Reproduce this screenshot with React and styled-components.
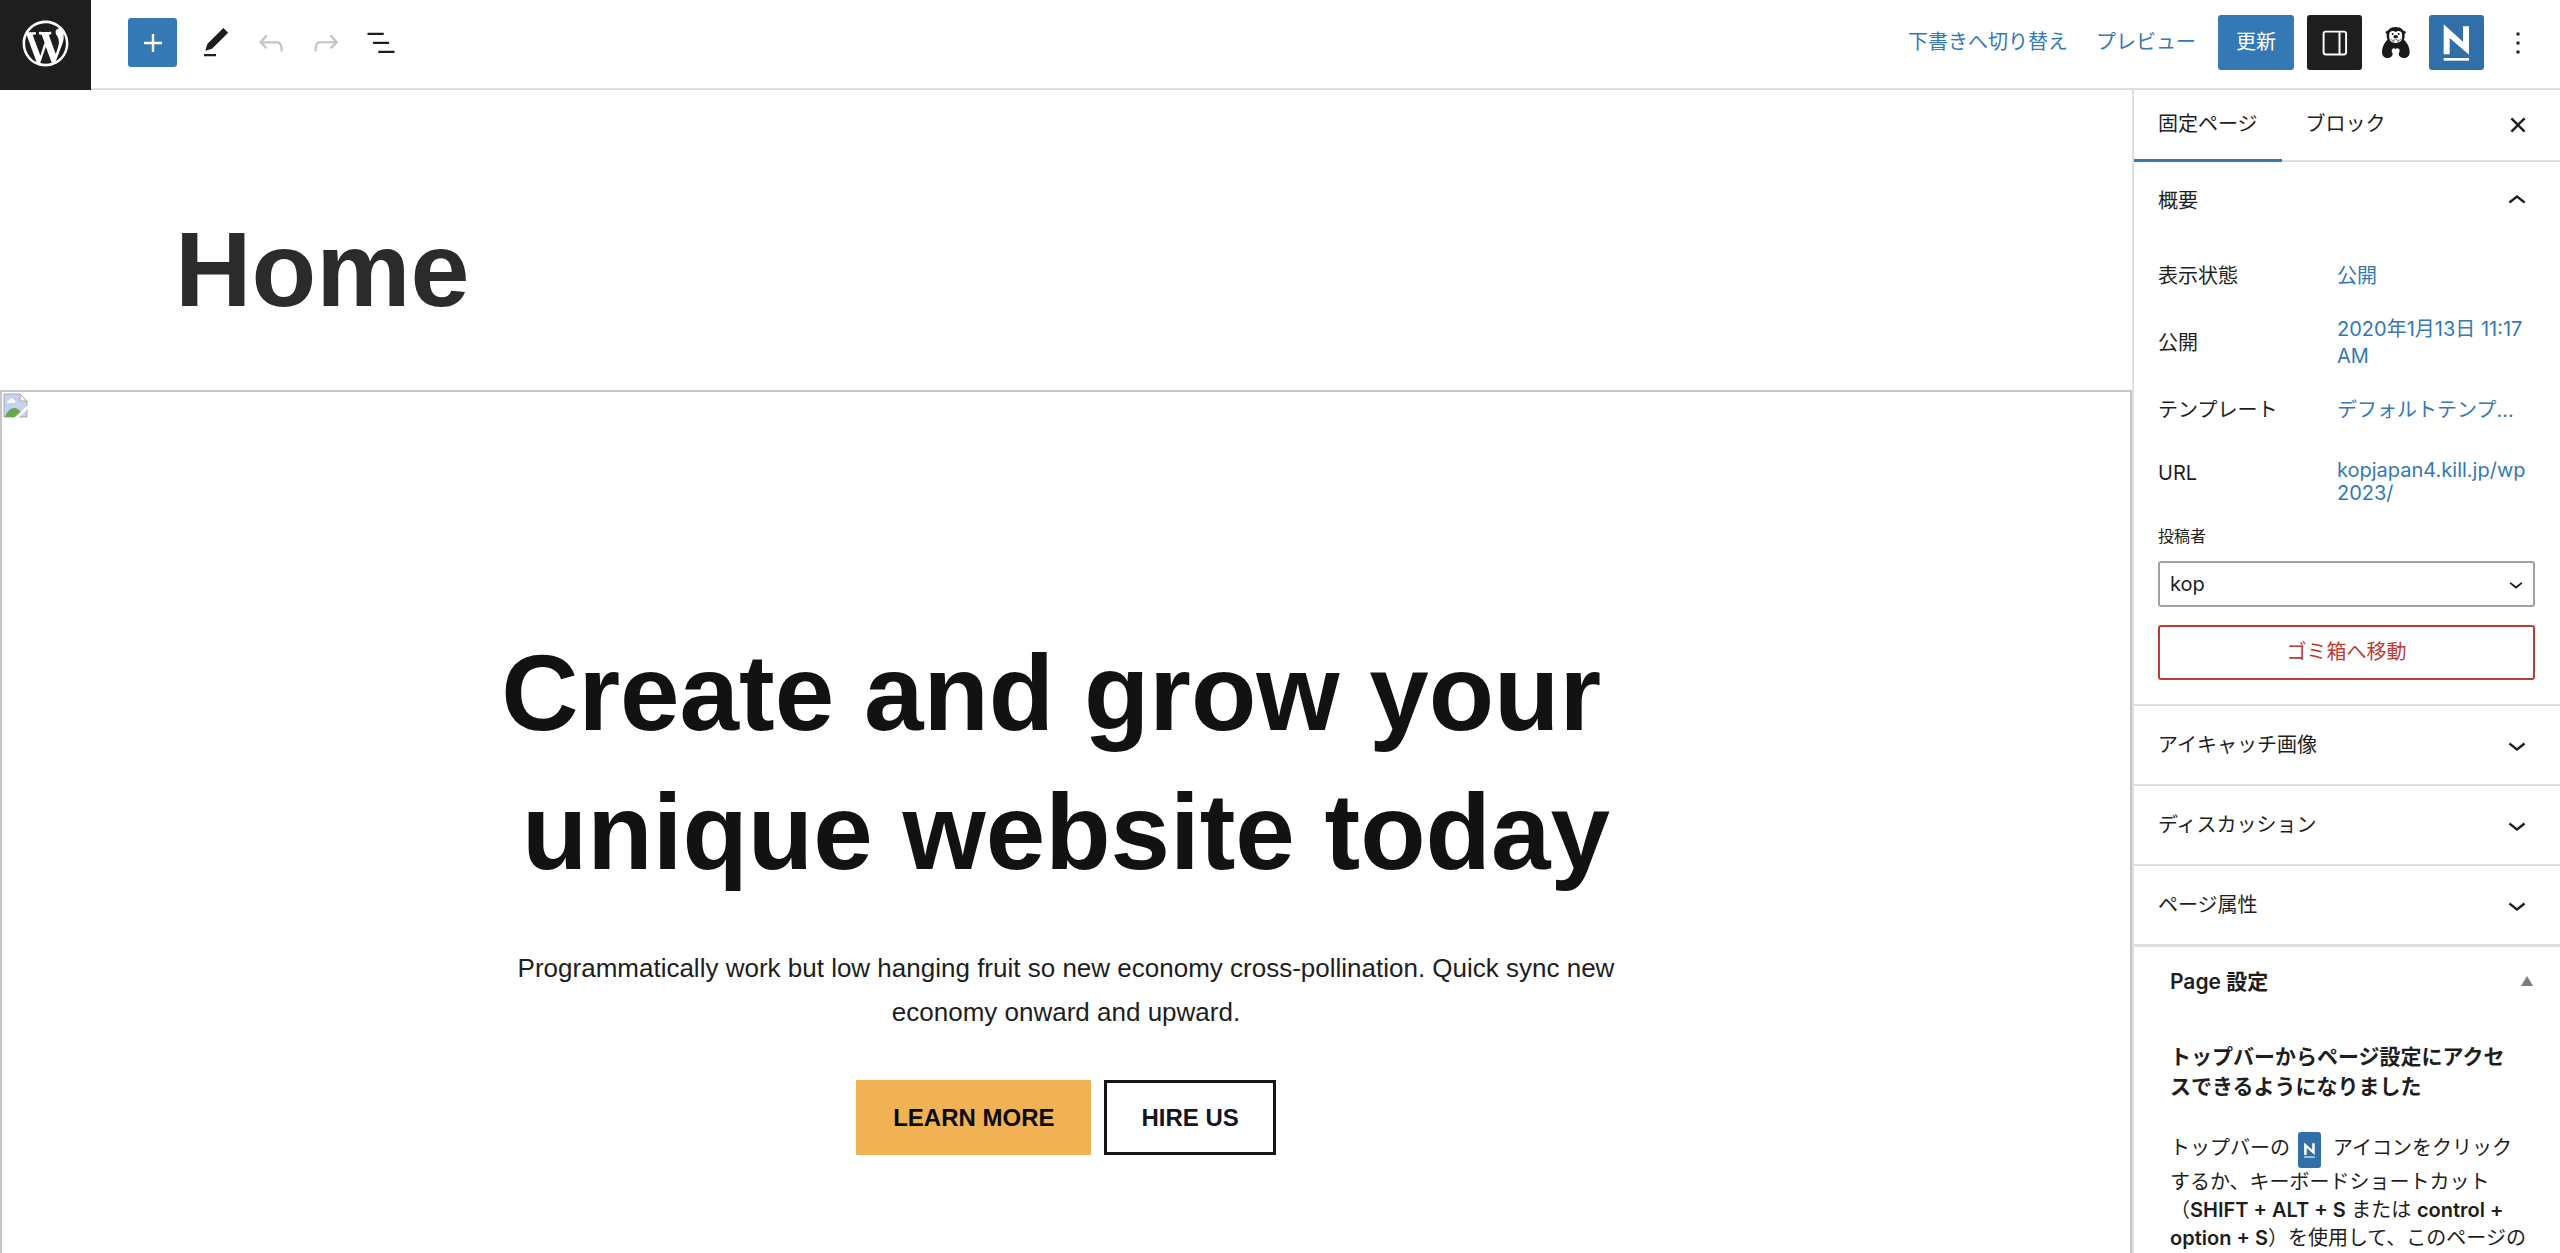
import styled, {createGlobalStyle} from 'styled-components';
import {useState} from 'react';

const GlobalStyle = createGlobalStyle`
  :root {
    --colors-primary: #3479b5;
    --colors-primary-dark: #306fa7;
    --colors-text: #1e1e1e;
    --colors-line: #dfdfdf;
    --colors-danger: #bf3a34;
    --family-ui: Inter, "Noto Sans CJK JP", sans-serif;
    --family-content: "Liberation Sans", Arial, sans-serif;
    --fs-sm: 16px;
    --fs-md: 20px;
    --fs-lg: 21px;
  }

  * {
    box-sizing: border-box;
  }

  body {
    margin: 0;
    background: #fff;
    color: var(--colors-text);
    font-family: var(--family-ui);
    font-size: var(--fs-md);
    line-height: 27px;
  }

  button, select {
    font: inherit;
    color: inherit;
    cursor: pointer;
  }
`;

const Screen = styled.div`
  display: flex;
  flex-direction: column;
  height: 100vh;
`;

const Header = styled.header`
  display: flex;
  align-items: center;
  flex: none;
  height: 90px;
  padding-right: 15px;
  border-bottom: 2px solid var(--colors-line);
`;

const HomeLink = styled.a`
  display: flex;
  align-items: center;
  justify-content: center;
  align-self: flex-start;
  flex: none;
  width: 91px;
  height: 90px;
  padding-bottom: 4px;
  background: var(--colors-text);
  color: #fff;
`;

const Tools = styled.div`
  display: flex;
  align-items: center;
  margin: 0 auto 0 37px;
  padding-bottom: 3px;
`;

const InserterButton = styled.button`
  display: flex;
  align-items: center;
  justify-content: center;
  width: 49px;
  height: 49px;
  margin-right: 11px;
  padding: 0;
  border: 0;
  border-radius: 3px;
  background: var(--colors-primary);
  color: #fff;
`;

const IconButton = styled.button`
  display: flex;
  align-items: center;
  justify-content: center;
  flex: none;
  width: 55px;
  height: 55px;
  padding: 0;
  border: 0;
  border-radius: 3px;
  background: ${({$tone}) => $tone || 'transparent'};
  color: ${({$tone}) => ($tone ? '#fff' : 'var(--colors-text)')};
  &:disabled {
    color: #c4c4c4;
  }
`;

const Actions = styled.div`
  display: flex;
  align-items: center;
  gap: 6px;
  padding-bottom: 3px;
`;

const TextButton = styled.button`
  height: 55px;
  margin-right: 10px;
  padding: 0 6px;
  border: 0;
  background: none;
  color: var(--colors-primary);
`;

const PrimaryButton = styled.button`
  height: 55px;
  margin-right: 7px;
  padding: 0 18px;
  border: 0;
  border-radius: 3px;
  background: var(--colors-primary);
  color: #fff;
`;

const Workspace = styled.div`
  display: flex;
  flex: 1;
  min-height: 0;
`;

const Canvas = styled.main`
  flex: 1;
  min-width: 0;
  overflow: hidden;
  font-family: var(--family-content);
`;

const PageTitle = styled.h1`
  margin: 0;
  padding: 110px 175px 52px;
  color: #2b2b2b;
  font-size: 106px;
  line-height: 138px;
`;

const Cover = styled.section`
  min-height: 1100px;
  padding: 1px;
  border: 2px solid #c6c6c6;
  text-align: center;
`;

const CoverContent = styled.div`
  max-width: 1140px;
  margin: 0 auto;
  padding-top: 206px;
`;

const CoverTitle = styled.h2`
  margin: 0;
  color: #121212;
  font-size: 107px;
  line-height: 139px;
`;

const CoverText = styled.p`
  margin: 44px 0 46px;
  line-height: 44px;
  font-size: 26px;
`;

const CoverButtons = styled.div`
  display: flex;
  justify-content: center;
  gap: 13px;
`;

const CoverButton = styled.a`
  padding: 0 34px;
  border: 3px solid ${({$filled}) => ($filled ? '#f0b254' : '#15151b')};
  background: ${({$filled}) => ($filled ? '#f0b254' : '#fff')};
  color: ${({$filled}) => ($filled ? '#0a0a0a' : '#15151b')};
  font-size: 24px;
  font-weight: 700;
  line-height: 69px;
  text-decoration: none;
`;

const BrokenImage = styled.svg`
  display: block;
  width: 25px;
  height: 25px;
`;

const Sidebar = styled.aside`
  flex: none;
  width: 428px;
  overflow: hidden;
  border-left: 2px solid var(--colors-line);
`;

const Tabs = styled.div`
  display: flex;
  align-items: stretch;
  height: 72px;
  padding-right: 15px;
  border-bottom: 2px solid var(--colors-line);
`;

const Tab = styled.button`
  padding: 0 24px;
  margin-bottom: -2px;
  border: 0;
  border-bottom: 3px solid ${({$active}) => ($active ? 'var(--colors-primary)' : 'transparent')};
  background: none;
`;

const CloseButton = styled(IconButton)`
  align-self: center;
  margin-left: auto;
`;

const Panel = styled.section`
  border-bottom: 2px solid var(--colors-line);
`;

const PanelToggle = styled.button`
  display: flex;
  align-items: center;
  justify-content: space-between;
  width: 100%;
  height: 78px;
  padding: 0 25px 0 24px;
  border: 0;
  background: none;
  text-align: left;
`;

const PanelBody = styled.div`
  padding: 0 25px 24px 24px;
`;

const Rows = styled.dl`
  display: grid;
  grid-template-columns: 179px 1fr;
  grid-template-rows: 62px 72px 62px 82px;
  align-items: center;
  margin: 0;
  padding-top: 5px;
`;

const RowLabel = styled.dt`
  padding-bottom: ${({$raised}) => ($raised ? '18px' : '0')};
`;

const RowValue = styled.dd`
  margin: 0;
  line-height: ${({$tight}) => ($tight ? '23px' : '27px')};
`;

const ValueButton = styled.button`
  display: block;
  width: 100%;
  padding: 0;
  border: 0;
  background: none;
  color: var(--colors-primary);
  text-align: left;
`;

const ValueLink = styled.a`
  color: var(--colors-primary);
  text-decoration: none;
`;

const FieldLabel = styled.label`
  display: block;
  margin-bottom: 12px;
  font-size: var(--fs-sm);
  line-height: 26px;
`;

const SelectWrap = styled.div`
  display: grid;
  align-items: center;
  margin-bottom: 18px;
  & > * {
    grid-area: 1 / 1;
  }
  & > svg {
    justify-self: end;
    margin-right: 5px;
    pointer-events: none;
  }
`;

const Select = styled.select`
  width: 100%;
  height: 46px;
  padding: 0 10px;
  border: 2px solid #a3a3a3;
  border-radius: 3px;
  background: #fff;
  appearance: none;
`;

const TrashButton = styled.button`
  width: 100%;
  height: 55px;
  border: 2px solid var(--colors-danger);
  border-radius: 3px;
  background: none;
  color: var(--colors-danger);
`;

const MetaBox = styled.section`
  padding: 0 25px 0 36px;
  border-top: 1px solid var(--colors-line);
`;

const MetaToggle = styled.button`
  display: flex;
  align-items: center;
  justify-content: space-between;
  width: 100%;
  height: 68px;
  padding: 0 2px 0 0;
  border: 0;
  background: none;
  font-size: var(--fs-lg);
  font-weight: 600;
`;

const MetaTitle = styled.h3`
  margin: 27px 10px 30px 0;
  font-size: var(--fs-lg);
  font-weight: 700;
  line-height: 30px;
`;

const MetaText = styled.p`
  margin: 0 -5px 0 0;
  line-height: 28px;
  & > b {
    font-weight: 600;
  }
`;

const InlineBadge = styled.span`
  display: inline-flex;
  justify-content: center;
  align-items: center;
  width: 23px;
  height: 36px;
  margin: 0 12px 0 8px;
  border-radius: 3px;
  background: var(--colors-primary-dark);
  color: #fff;
  vertical-align: middle;
`;

const paths = {
    plus: 'M18 11.2h-5.2V6h-1.6v5.2H6v1.6h5.2V18h1.6v-5.2H18z',
    edit: 'M20.1 5.1L16.9 2 6.2 12.7l-1.3 4.4 4.5-1.3L20.1 5.1zM4 20.8h8v-1.5H4v1.5z',
    undo: 'M18.3 11.7c-.6-.6-1.4-.9-2.3-.9H6.7l2.9-3.3-1.1-1-4.5 5L8.5 16l1-1-2.7-2.7H16c.5 0 .9.2 1.3.5 1 1 1 3.4 1 4.5v.3h1.5v-.2c0-1.5 0-4.3-1.5-5.7z',
    redo: 'M15.6 6.5l-1.1 1 2.9 3.3H8c-.9 0-1.7.3-2.3.9-1.4 1.5-1.4 4.2-1.4 5.6v.2h1.5v-.3c0-1.1 0-3.5 1-4.5.3-.3.7-.5 1.3-.5h9.2L14.5 15l1.1 1.1 4.6-4.6-4.6-5z',
    list: 'M13.8 5.2H3v1.5h10.8V5.2zm-3.6 12v1.5H21v-1.5H10.2zm7.2-6H6.6v1.5h10.8v-1.5z',
    more: 'M13 19h-2v-2h2v2zm0-6h-2v-2h2v2zm0-6h-2V5h2v2z',
    close: 'M12 13.4l-4.9 5-1.5-1.4 5-5-5-5 1.5-1.4 4.9 5 4.9-5L18.4 7l-5 5 5 5-1.5 1.4z',
    down: 'M17.5 11.6L12 16l-5.5-4.4.9-1.2L12 14l4.5-3.6 1 1.2z',
    up: 'M6.5 12.4L12 8l5.5 4.4-.9 1.2L12 10l-4.5 3.6-1-1.2z',
    wordpress: 'M20 10c0-5.51-4.49-10-10-10C4.48 0 0 4.49 0 10c0 5.52 4.48 10 10 10 5.51 0 10-4.48 10-10zM7.78 15.37L4.37 6.22c.55-.02 1.17-.08 1.17-.08.5-.06.44-1.13-.06-1.11 0 0-1.45.11-2.37.11-.18 0-.37 0-.58-.01C4.12 2.69 6.87 1.11 10 1.11c2.33 0 4.45.87 6.05 2.34-.68-.11-1.65.39-1.65 1.58 0 .74.45 1.36.9 2.1.35.61.55 1.36.55 2.46 0 1.49-1.4 5-1.4 5l-3.03-8.37c.54-.02.82-.17.82-.17.5-.05.44-1.25-.06-1.22 0 0-1.44.12-2.38.12-.87 0-2.33-.12-2.33-.12-.5-.03-.56 1.2-.06 1.22l.92.08 1.26 3.41zM17.41 10c.24-.64.74-1.87.43-4.25.7 1.29 1.05 2.71 1.05 4.25 0 3.29-1.73 6.24-4.4 7.78.97-2.59 1.94-5.2 2.92-7.78zM6.1 18.09C3.12 16.65 1.11 13.53 1.11 10c0-1.3.23-2.48.72-3.59C3.25 10.3 4.67 14.2 6.1 18.09zm4.03-6.63l2.58 6.98c-.86.29-1.76.45-2.71.45-.79 0-1.57-.11-2.29-.33.81-2.38 1.62-4.74 2.42-7.1z'
};

const Icon = ({name, size = 36, viewBox = '0 0 24 24'}) => (
    <svg width={size} height={size} viewBox={viewBox} fill="currentColor" aria-hidden="true">
        <path d={paths[name]}/>
    </svg>
);

const PanelIcon = () => (
    <svg width="36" height="36" viewBox="0 0 24 24" fill="none" stroke="currentColor" strokeWidth="1.3" aria-hidden="true">
        <rect x="4.4" y="4.4" width="15" height="15.2" rx="1.4"/>
        <path d="M15 4.4v15.2"/>
    </svg>
);

const NishikiIcon = ({size = 55}) => (
    <svg width={size} height={size} viewBox="0 0 165 165" fill="currentColor" aria-hidden="true">
        <path d="M44 28l58 52V34h18v85L62 69v49H44z"/>
        <path d="M44 129h76v8H44z"/>
    </svg>
);

const AnimalIcon = () => (
    <svg width="28" height="31" viewBox="0 0 84 93" aria-hidden="true">
        <g fill="#1a1a1a">
            <circle cx="16" cy="16" r="5"/>
            <circle cx="66" cy="16" r="5"/>
            <path d="M41 0c17 0 27 10 27 25 0 6-1 9-2 13 11 10 17 24 17 37 0 11-6 18-16 18-11 0-17-5-17-12 0-4 3-6 3-10 0-4-3-7-7-7-2 0-4 1-5 3-1-2-3-3-5-3-4 0-7 3-7 7 0 4 3 6 3 10 0 7-6 12-16 12C6 93 0 86 0 75c0-13 6-27 16-37-1-4-2-7-2-13C14 10 24 0 41 0z"/>
        </g>
        <path d="M41 16c5-6 18-5 19 4 1 5 0 9 0 14-1 9-9 14-19 14s-18-5-19-14c0-5-1-9 0-14 1-9 14-10 19-4z" fill="#fff"/>
        <g fill="#1a1a1a">
            <circle cx="32" cy="21" r="3"/>
            <circle cx="50" cy="21" r="3"/>
            <ellipse cx="41" cy="29" rx="7" ry="5"/>
        </g>
        <path d="M25 36c6 6 12 5 16 0 4 5 10 6 16 0M32 43l4 1M50 43l-4 1" fill="none" stroke="#1a1a1a" strokeWidth="2"/>
    </svg>
);

const TriangleIcon = () => (
    <svg width="12" height="10" viewBox="0 0 12 10" aria-hidden="true">
        <path d="M6 0l6 10H0z" fill="#787c82"/>
    </svg>
);

const closedPanels = ['アイキャッチ画像', 'ディスカッション', 'ページ属性'];

const EditorHeader = () => (
    <Header>
        <HomeLink href="#" aria-label="WordPress">
            <Icon name="wordpress" size={55} viewBox="-2 -2 24 24"/>
        </HomeLink>
        <Tools>
            <InserterButton aria-label="追加"><Icon name="plus"/></InserterButton>
            <IconButton aria-label="ツール"><Icon name="edit"/></IconButton>
            <IconButton aria-label="元に戻す" disabled><Icon name="undo"/></IconButton>
            <IconButton aria-label="やり直す" disabled><Icon name="redo"/></IconButton>
            <IconButton aria-label="リスト表示"><Icon name="list"/></IconButton>
        </Tools>
        <Actions>
            <TextButton>下書きへ切り替え</TextButton>
            <TextButton>プレビュー</TextButton>
            <PrimaryButton>更新</PrimaryButton>
            <IconButton $tone="var(--colors-text)" aria-label="設定"><PanelIcon/></IconButton>
            <IconButton aria-label="プラグイン"><AnimalIcon/></IconButton>
            <IconButton $tone="var(--colors-primary-dark)" aria-label="ページ設定"><NishikiIcon/></IconButton>
            <IconButton aria-label="オプション"><Icon name="more"/></IconButton>
        </Actions>
    </Header>
);

const PageCanvas = () => (
    <Canvas>
        <PageTitle>Home</PageTitle>
        <Cover>
            <BrokenImage viewBox="0 0 25 25" aria-hidden="true">
                <path d="M1 1h16l7 7v16H1z" fill="#c5d3f3" stroke="#a8a8a8"/>
                <path d="M17 1v7h7z" fill="#fff" stroke="#a8a8a8"/>
                <path d="M4 10c0-2 2-2 2-3 2-3 5-1 5 0 2 0 2 3 0 3z" fill="#fff"/>
                <path d="M2 24c2-6 6-9 9-9s6 2 8 5l-4 4z" fill="#67a94c"/>
                <path d="M25 12v4L15 25h-4z" fill="#fff"/>
            </BrokenImage>
            <CoverContent>
                <CoverTitle>Create and grow your&nbsp;<br/>unique website today</CoverTitle>
                <CoverText>
                    Programmatically work but low hanging fruit so new economy cross-pollination. Quick sync new economy onward and upward.
                </CoverText>
                <CoverButtons>
                    <CoverButton href="#" $filled>LEARN MORE</CoverButton>
                    <CoverButton href="#">HIRE US</CoverButton>
                </CoverButtons>
            </CoverContent>
        </Cover>
    </Canvas>
);

const SummaryPanel = () => {
    const [open, setOpen] = useState(true);
    const [author, setAuthor] = useState('kop');

    return (
        <Panel>
            <PanelToggle aria-expanded={open} onClick={() => setOpen(!open)}>
                概要
                <Icon name={open ? 'up' : 'down'}/>
            </PanelToggle>
            {open && (
                <PanelBody>
                    <Rows>
                        <RowLabel>表示状態</RowLabel>
                        <RowValue><ValueButton>公開</ValueButton></RowValue>
                        <RowLabel>公開</RowLabel>
                        <RowValue><ValueButton>2020年1月13日 11:17 AM</ValueButton></RowValue>
                        <RowLabel>テンプレート</RowLabel>
                        <RowValue><ValueButton>デフォルトテンプ...</ValueButton></RowValue>
                        <RowLabel $raised>URL</RowLabel>
                        <RowValue $tight><ValueLink href="#">kopjapan4.kill.jp/wp<wbr/>2023/</ValueLink></RowValue>
                    </Rows>
                    <FieldLabel htmlFor="author">投稿者</FieldLabel>
                    <SelectWrap>
                        <Select id="author" value={author} onChange={(e) => setAuthor(e.target.value)}>
                            <option value="kop">kop</option>
                        </Select>
                        <Icon name="down" size={28}/>
                    </SelectWrap>
                    <TrashButton>ゴミ箱へ移動</TrashButton>
                </PanelBody>
            )}
        </Panel>
    );
};

const App = () => (
    <>
        <GlobalStyle/>
        <Screen>
            <EditorHeader/>
            <Workspace>
                <PageCanvas/>
                <Sidebar>
                    <Tabs>
                        <Tab $active>固定ページ</Tab>
                        <Tab>ブロック</Tab>
                        <CloseButton aria-label="閉じる"><Icon name="close" size={28}/></CloseButton>
                    </Tabs>
                    <SummaryPanel/>
                    {closedPanels.map((title) => (
                        <Panel key={title}>
                            <PanelToggle aria-expanded="false">
                                {title}
                                <Icon name="down"/>
                            </PanelToggle>
                        </Panel>
                    ))}
                    <MetaBox>
                        <MetaToggle aria-expanded="true">
                            Page 設定
                            <TriangleIcon/>
                        </MetaToggle>
                        <MetaTitle>トップバーからページ設定にアクセスできるようになりました</MetaTitle>
                        <MetaText>
                            トップバーの<InlineBadge><NishikiIcon size={28}/></InlineBadge>アイコンをクリック<br/>
                            するか、キーボードショートカット（<b>SHIFT + ALT + S</b> または <b>control + option + S</b>）を使用して、このページの
                        </MetaText>
                    </MetaBox>
                </Sidebar>
            </Workspace>
        </Screen>
    </>
);

export default App;
